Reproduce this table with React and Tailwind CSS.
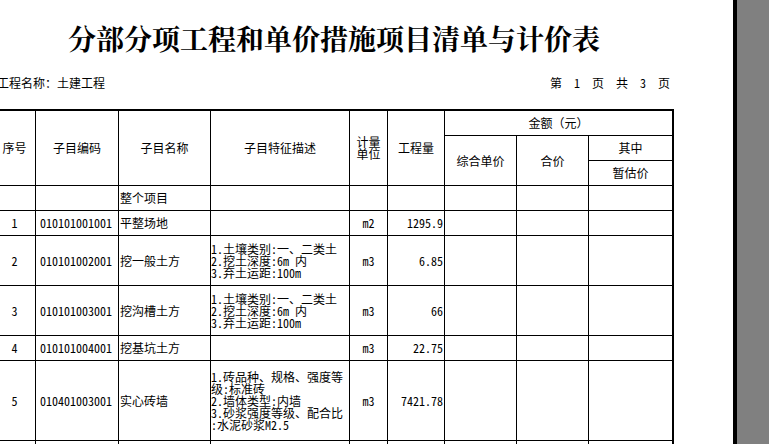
import React from "react";

const grid = "grid grid-cols-[42px_83px_92px_139px_38px_57px_72px_72px_83px]";
const cell = "border-r border-b border-black flex items-center justify-center overflow-hidden whitespace-nowrap";
const lastCell = "border-b border-black flex items-center justify-center overflow-hidden whitespace-nowrap";

const soil = ["1.土壤类别:一、二类土", "2.挖土深度:6m 内", "3.弃土运距:100m"];

const rows = [
  { h: "h-[25px]", no: "", code: "", name: "整个项目", desc: [], unit: "", qty: "" },
  { h: "h-[25px]", no: "1", code: "010101001001", name: "平整场地", desc: [], unit: "m2", qty: "1295.9" },
  { h: "h-[50px]", no: "2", code: "010101002001", name: "挖一般土方", desc: soil, unit: "m3", qty: "6.85" },
  { h: "h-[50px]", no: "3", code: "010101003001", name: "挖沟槽土方", desc: soil, unit: "m3", qty: "66" },
  { h: "h-[25px]", no: "4", code: "010101004001", name: "挖基坑土方", desc: [], unit: "m3", qty: "22.75" },
  {
    h: "h-[80px]",
    no: "5",
    code: "010401003001",
    name: "实心砖墙",
    desc: ["1.砖品种、规格、强度等", "级:标准砖", "2.墙体类型:内墙", "3.砂浆强度等级、配合比", ":水泥砂浆M2.5"],
    unit: "m3",
    qty: "7421.78",
  },
  { h: "h-[40px]", no: "", code: "", name: "", desc: [], unit: "", qty: "" },
];

function DataRow({ r }) {
  return (
    <div className={`${grid} ${r.h}`}>
      <div className={cell}>{r.no}</div>
      <div className={`${cell} justify-start pl-[4px]`}>{r.code}</div>
      <div className={`${cell} justify-start pl-px`}>{r.name}</div>
      <div className={`${cell} flex-col items-start justify-center leading-[12px]`}>
        {r.desc.map((d, i) => (
          <span key={i}>{d}</span>
        ))}
      </div>
      <div className={cell}>{r.unit}</div>
      <div className={`${cell} justify-end pr-px`}>{r.qty}</div>
      <div className={cell}></div>
      <div className={cell}></div>
      <div className={lastCell}></div>
    </div>
  );
}

export default function App() {
  return (
    <div className="flex h-[444px] w-[769px] overflow-hidden bg-white text-black">
      {/* report page */}
      <div className="w-[733px] shrink-0 overflow-hidden">
        <div className="ml-[-6px] w-[680px] font-['Noto_Sans_Mono_CJK_SC','Noto_Sans_CJK_SC',sans-serif] text-[12px]">
          <h1 className="pt-[24px] text-center font-['Noto_Serif_CJK_SC','Noto_Sans_CJK_SC',serif] text-[28px] font-bold leading-[28px]">
            分部分项工程和单价措施项目清单与计价表
          </h1>

          <div className="mt-[25px] flex h-[12px] items-center justify-between pl-[3px] pr-[4px] leading-[12px]">
            <span>工程名称：土建工程</span>
            <span className="flex gap-[12px]">
              <span>第</span>
              <span>1</span>
              <span>页</span>
              <span>共</span>
              <span>3</span>
              <span>页</span>
            </span>
          </div>

          <div className="mt-[20px] border-t-2 border-r-2 border-black">
            {/* header */}
            <div className={`${grid} grid-rows-[25px_25px_25px]`}>
              <div className={`${cell} row-span-3`}>序号</div>
              <div className={`${cell} row-span-3`}>子目编码</div>
              <div className={`${cell} row-span-3`}>子目名称</div>
              <div className={`${cell} row-span-3`}>子目特征描述</div>
              <div className={`${cell} row-span-3 flex-col leading-[12px]`}>
                <span>计量</span>
                <span>单位</span>
              </div>
              <div className={`${cell} row-span-3`}>工程量</div>
              <div className={`${lastCell} col-span-3`}>金额（元）</div>
              <div className={`${cell} row-span-2`}>综合单价</div>
              <div className={`${cell} row-span-2`}>合价</div>
              <div className={lastCell}>其中</div>
              <div className={lastCell}>暂估价</div>
            </div>

            {rows.map((r, i) => (
              <DataRow key={i} r={r} />
            ))}
          </div>
        </div>
      </div>

      {/* viewer edge */}
      <div className="w-[4px] shrink-0 bg-black" />
      <div className="flex-1 bg-[#808080]" />
    </div>
  );
}
